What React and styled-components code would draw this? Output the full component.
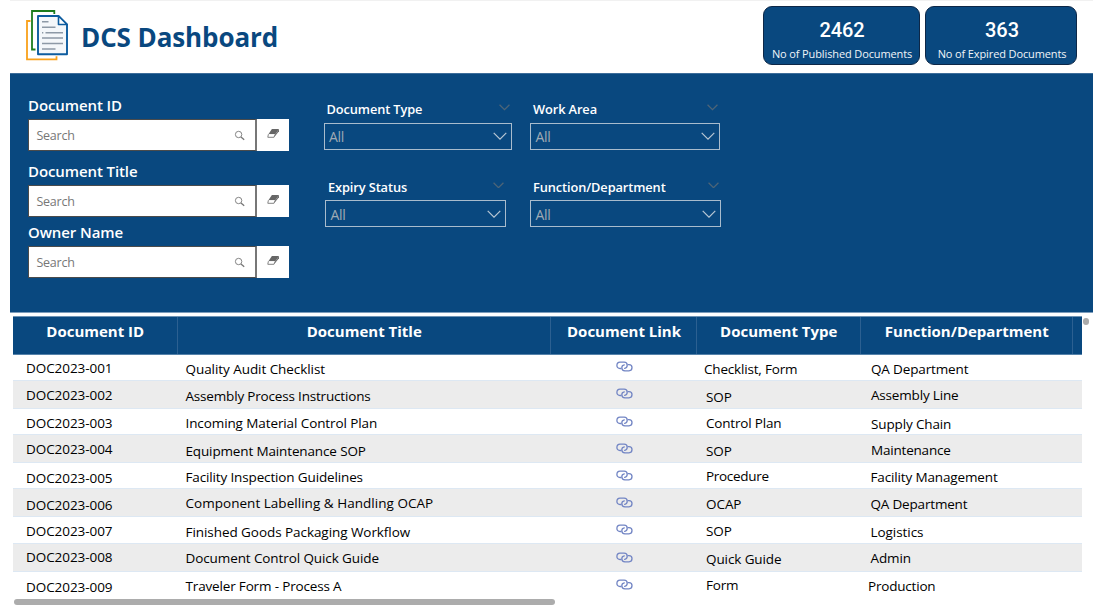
import React from 'react';
import styled, { createGlobalStyle } from 'styled-components';

const NAVY = '#09487f';

const GlobalStyle = createGlobalStyle`
  * { box-sizing: border-box; }
  body {
    margin: 0;
    background: #fff;
    font-family: "Open Sans", "Noto Sans", sans-serif;
    overflow: hidden;
  }
`;

const Page = styled.div`
  width: 1100px;
  height: 606px;
  padding-left: 10px;
  display: flex;
  flex-direction: column;
`;

const Header = styled.header`
  height: 73px;
  width: 1083px;
  border-top: 1px solid #f1f1f1;
  display: flex;
  align-items: flex-start;
  padding: 5px 16px 0 15px;
`;

const Logo = styled.svg`
  width: 44px;
  height: 52px;
  margin-top: 3px;
  flex: none;
`;

const Title = styled.h1`
  margin: 13px auto 0 12px;
  font-size: 26px;
  line-height: 36px;
  font-weight: 700;
  letter-spacing: -0.1px;
  color: ${NAVY};
  white-space: nowrap;
`;

const Kpi = styled.div`
  width: ${(p) => p.$width}px;
  height: 59px;
  margin-left: ${(p) => p.$gap || 0}px;
  border: 1.5px solid #0d2747;
  border-radius: 9px;
  background: ${NAVY};
  color: #fff;
  text-align: center;
  padding: 10px 0 0 2px;
  white-space: nowrap;
`;

const KpiValue = styled.div`
  font-family: Roboto, sans-serif;
  font-size: 20px;
  font-weight: 500;
  line-height: 26px;
  letter-spacing: -0.1px;
`;

const KpiLabel = styled.div`
  height: 16px;
  margin-top: 1px;
  overflow: hidden;
  font-size: 11px;
  line-height: 20px;
  letter-spacing: -0.12px;
  color: #f1f5f9;
`;

const FilterPanel = styled.section`
  width: 1083px;
  height: 240px;
  background: ${NAVY};
  border-top: 1px solid #3d6d9a;
  border-bottom: 1px solid #7d9dbc;
  display: flex;
  padding-left: 18px;
`;

const SearchColumn = styled.div`
  width: 261px;
  padding-top: 21px;
`;

const SearchField = styled.div`
  margin-bottom: ${(p) => p.$after || 0}px;
`;

const SearchLabel = styled.label`
  display: block;
  height: 24px;
  line-height: 20px;
  font-size: 15px;
  font-weight: 620;
  letter-spacing: -0.1px;
  color: #fff;
  white-space: nowrap;
`;

const SearchRow = styled.div`
  display: flex;
  height: 32px;
`;

const SearchBox = styled.div`
  width: 229px;
  display: flex;
  align-items: center;
  justify-content: space-between;
  background: #fff;
  border: 1px solid #4b4b4b;
  border-right-width: 2px;
  border-right-color: #777;
  padding: 0 10px 0 7.5px;
  font-size: 12.5px;
  letter-spacing: -0.25px;
  color: #777;
`;

const ClearButton = styled.div`
  width: 32px;
  background: #fff;
  display: flex;
  justify-content: center;
  padding-top: 9px;
`;

const SlicerGrid = styled.div`
  display: grid;
  grid-template-columns: 206.5px 191px;
  grid-template-rows: 77.5px 77.5px;
  padding: 25px 0 0 34.5px;
`;

const Slicer = styled.div`
  width: ${(p) => p.$width}px;
  margin-left: ${(p) => p.$indent || 0}px;
`;

const SlicerHead = styled.div`
  display: flex;
  justify-content: space-between;
  height: 23.5px;
  line-height: 20px;
  padding: 0 2.5px 0 3px;
  font-size: 12.8px;
  font-weight: 650;
  letter-spacing: -0.1px;
  color: #fff;
  white-space: nowrap;
`;

const SlicerBox = styled.div`
  height: 27px;
  display: flex;
  align-items: center;
  justify-content: space-between;
  border: 1.5px solid #a9bccd;
  padding: 1px 4px 0 4.5px;
  font-size: 14px;
  letter-spacing: -0.3px;
  color: #9faab4;
`;

const TableArea = styled.section`
  margin: 3px 0 0 3px;
  width: 1080px;
  display: flex;
  align-items: flex-start;
  gap: 1px;
`;

const Table = styled.div`
  width: 1069px;
`;

const COLUMNS = '164.5px 373.5px 146px 163.5px 212.5px 9px';

const HeadRow = styled.div`
  display: grid;
  grid-template-columns: ${COLUMNS};
  height: 39px;
  background: ${NAVY};
  border-top: 1px solid #6e93b5;
  border-bottom: 1px solid #5582aa;
`;

const HeadCell = styled.div`
  border-right: 1px solid ${(p) => (p.$last ? 'transparent' : '#2c6091')};
  padding-left: 1px;
  text-align: center;
  font-size: 15px;
  font-weight: 700;
  line-height: 29px;
  color: #fff;
  white-space: nowrap;
`;

const Row = styled.div`
  display: grid;
  grid-template-columns: ${COLUMNS};
  height: ${(p) => p.$height}px;
  background: ${(p) => (p.$striped ? '#ececec' : '#fff')};
  border-bottom: ${(p) => (p.$last ? 0 : 1)}px solid #dde8f3;
`;

const Cell = styled.div`
  padding: ${(p) => p.$top}px 0 0 ${(p) => p.$left}px;
  height: 20px;
  font-size: 13.5px;
  line-height: 20px;
  letter-spacing: ${(p) => p.$tracking || -0.06}px;
  color: #000;
  white-space: nowrap;
`;

const LinkCell = styled.div`
  padding: ${(p) => p.$top}px 0 0 64.5px;
  line-height: 0;
`;

const VerticalThumb = styled.div`
  width: 6px;
  height: 7px;
  margin-top: 2px;
  border-radius: 3px;
  background: #ababab;
`;

const HorizontalThumb = styled.div`
  width: 541px;
  height: 6px;
  margin: 0.5px 0 0 4px;
  border-radius: 3px;
  background: #acacac;
`;

function DocumentsLogo() {
  return (
    <Logo viewBox="0 0 44 52" fill="none">
      <path d="M5.5 12H2V50.3H31.5V47.2" stroke="#f9a11b" strokeWidth="1.8" />
      <path d="M10.5 40.5H7V2H29.3V5" stroke="#1c7c1c" strokeWidth="1.8" />
      <path d="M13 7H33.5L42 15.5V45.3H13Z" fill="#f4f7fa" stroke="#0d5c9f" strokeWidth="1.9" strokeLinejoin="round" />
      <path d="M33.5 7V15.5H42Z" fill="#fff" stroke="#0d5c9f" strokeWidth="1.6" strokeLinejoin="round" />
      <path d="M17 12.8H23.5M17 18.3H30.5M17 23.7H18.3M20.5 23.7H38M17 29H38M17 34.4H38M17 39.9H30.5" stroke="#8d99a6" strokeWidth="1.5" />
    </Logo>
  );
}

function Magnifier() {
  return (
    <svg width="11" height="11" viewBox="0 0 11 11" fill="none" stroke="#777" strokeWidth="0.9">
      <circle cx="4.6" cy="4.5" r="3.2" />
      <path d="M7 6.9L10.2 9.7" strokeWidth="1.3" />
    </svg>
  );
}

function Eraser() {
  return (
    <svg width="13" height="11" viewBox="0 0 13 11">
      <path d="M4.9 1H12L8.3 6.2H1.4Z" fill="#666" />
      <path d="M1.4 6.2L0.8 9.3H6.9L8.3 6.2" fill="#fff" stroke="#777" strokeWidth="0.9" />
      <path d="M6.9 9.6L8.3 6.2L12 1L12 3.2Z" fill="#6c6c6c" />
    </svg>
  );
}

function Chevron({ size, color, weight }) {
  return (
    <svg width={size} height={size * 0.6} viewBox="0 0 14 8.4" fill="none">
      <path d="M0.7 0.9L7 7.2L13.3 0.9" stroke={color} strokeWidth={weight} />
    </svg>
  );
}

const HeadChevron = styled.span`
  line-height: 0;
  padding-top: 5px;
`;

function LinkIcon() {
  return (
    <svg width="17" height="11" viewBox="0 0 17 11" fill="none" stroke="#7285c4" strokeWidth="1.3" strokeLinecap="round">
      <path d="M4.9 7.5H4C2.1 7.5 0.9 6.1 0.9 4.4C0.9 2.6 2.2 1.2 4 1.2H8.1C9.9 1.2 11.2 2.5 11.2 4.2C11.2 5.8 10.2 7 8.7 7.3" />
      <path d="M12.1 3.6H13C14.9 3.6 16 5 16 6.6C16 8.4 14.7 9.8 13 9.8H8.9C7.1 9.8 5.8 8.5 5.8 6.8C5.8 5.3 6.8 4 8.3 3.8" />
    </svg>
  );
}

const searches = [
  { label: 'Document ID', after: 10 },
  { label: 'Document Title', after: 5 },
  { label: 'Owner Name', after: 0 },
];

const slicers = [
  { label: 'Document Type', width: 188.5, indent: 0 },
  { label: 'Work Area', width: 190, indent: 0 },
  { label: 'Expiry Status', width: 181, indent: 1.5 },
  { label: 'Function/Department', width: 191, indent: 0 },
];

const headings = ['Document ID', 'Document Title', 'Document Link', 'Document Type', 'Function/Department', ''];

// Text cells: [text, top offset, left offset, letter spacing].
const rows = [
  { h: 26, id: ['DOC2023-001', 3], title: ['Quality Audit Checklist', 4], link: 6, type: ['Checklist, Form', 4, 7, -0.18], dept: ['QA Department', 4, 10.5, -0.14] },
  { h: 28, id: ['DOC2023-002', 4], title: ['Assembly Process Instructions', 5, 8, -0.18], link: 7, type: ['SOP', 6, 9], dept: ['Assembly Line', 4, 10.5, -0.18] },
  { h: 26, id: ['DOC2023-003', 4], title: ['Incoming Material Control Plan', 4, 8, -0.1], link: 6.5, type: ['Control Plan', 4, 9, -0.18], dept: ['Supply Chain', 5, 10.5, -0.14] },
  { h: 28, id: ['DOC2023-004', 4], title: ['Equipment Maintenance SOP', 6, 8, -0.14], link: 7.5, type: ['SOP', 6, 9], dept: ['Maintenance', 5, 10.5, -0.2] },
  { h: 26, id: ['DOC2023-005', 5], title: ['Facility Inspection Guidelines', 4, 8, -0.14], link: 7, type: ['Procedure', 3, 9, -0.3], dept: ['Facility Management', 4, 10, -0.14] },
  { h: 28, id: ['DOC2023-006', 6], title: ['Component Labelling & Handling OCAP', 4, 8, 0.03], link: 7.5, type: ['OCAP', 5, 9], dept: ['QA Department', 5, 10, -0.18] },
  { h: 27, id: ['DOC2023-007', 4], title: ['Finished Goods Packaging Workflow', 5], link: 6.5, type: ['SOP', 4, 9], dept: ['Logistics', 5, 10] },
  { h: 28, id: ['DOC2023-008', 3], title: ['Document Control Quick Guide', 4, 8, -0.1], link: 7.5, type: ['Quick Guide', 5, 9, -0.1], dept: ['Admin', 4, 10, -0.1] },
  { h: 26, id: ['DOC2023-009', 5], title: ['Traveler Form - Process A', 4, 8, -0.16], link: 7, type: ['Form', 3, 9, -0.2], dept: ['Production', 4, 7.5, -0.2] },
];

function TextCell({ cell: [text, top, left, tracking], defaultLeft }) {
  return (
    <Cell $top={top} $left={left ?? defaultLeft} $tracking={tracking}>
      {text}
    </Cell>
  );
}

export default function App() {
  return (
    <Page>
      <GlobalStyle />
      <Header>
        <DocumentsLogo />
        <Title>DCS Dashboard</Title>
        <Kpi $width={157}>
          <KpiValue>2462</KpiValue>
          <KpiLabel>No of Published Documents</KpiLabel>
        </Kpi>
        <Kpi $width={152} $gap={5.5}>
          <KpiValue>363</KpiValue>
          <KpiLabel>No of Expired Documents</KpiLabel>
        </Kpi>
      </Header>

      <FilterPanel>
        <SearchColumn>
          {searches.map((s) => (
            <SearchField key={s.label} $after={s.after}>
              <SearchLabel>{s.label}</SearchLabel>
              <SearchRow>
                <SearchBox>
                  <span>Search</span>
                  <Magnifier />
                </SearchBox>
                <ClearButton>
                  <Eraser />
                </ClearButton>
              </SearchRow>
            </SearchField>
          ))}
        </SearchColumn>
        <SlicerGrid>
          {slicers.map((s) => (
            <Slicer key={s.label} $width={s.width} $indent={s.indent}>
              <SlicerHead>
                <span>{s.label}</span>
                <HeadChevron>
                  <Chevron size={11} color="#4e6577" weight={1.6} />
                </HeadChevron>
              </SlicerHead>
              <SlicerBox>
                <span>All</span>
                <Chevron size={14} color="#b9c7d4" weight={1.2} />
              </SlicerBox>
            </Slicer>
          ))}
        </SlicerGrid>
      </FilterPanel>

      <TableArea>
        <Table>
          <HeadRow>
            {headings.map((h, i) => (
              <HeadCell key={i} $last={i === 5}>{h}</HeadCell>
            ))}
          </HeadRow>
          {rows.map((r, i) => (
            <Row key={r.id[0]} $height={r.h} $striped={i % 2 === 1} $last={i === rows.length - 1}>
              <TextCell cell={r.id} defaultLeft={13} />
              <TextCell cell={r.title} defaultLeft={8} />
              <LinkCell $top={r.link}><LinkIcon /></LinkCell>
              <TextCell cell={r.type} defaultLeft={9} />
              <TextCell cell={r.dept} defaultLeft={10} />
            </Row>
          ))}
        </Table>
        <VerticalThumb />
      </TableArea>
      <HorizontalThumb />
    </Page>
  );
}
